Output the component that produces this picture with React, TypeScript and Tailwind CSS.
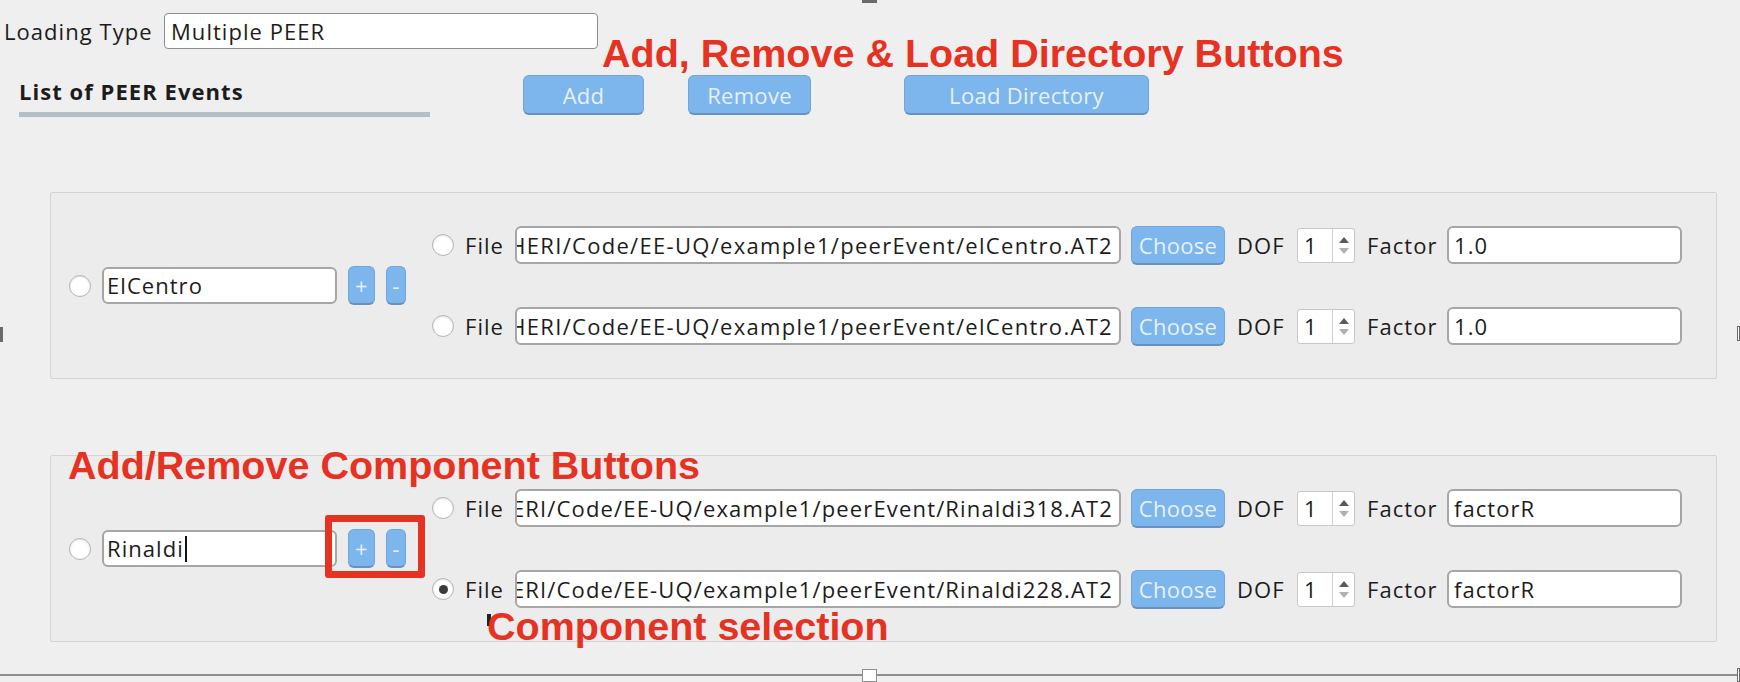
import React from "react";

const FONT = "font-['Open_Sans','Noto_Sans',sans-serif] tracking-[1.05px]";
const RED = "absolute font-['Liberation_Sans',Arial,sans-serif] font-bold text-[39.5px] leading-none tracking-normal text-[#e53222] whitespace-nowrap";

function Radio({ checked = false }: { checked?: boolean }) {
  return (
    <div className="w-[22px] h-[22px] shrink-0 rounded-full bg-white border border-[#b4b4b4] shadow-[inset_0_1px_2px_rgba(0,0,0,0.12)] flex items-center justify-center">
      {checked && <div className="w-[9px] h-[9px] rounded-full bg-[#3a3a3a]" />}
    </div>
  );
}

function BlueBtn({ label, w, h, text = "text-[22px]" }: { label: string; w: string; h: string; text?: string }) {
  return (
    <div
      className={`${w} ${h} ${text} shrink-0 rounded-[6px] bg-[#7db5ed] border border-[#6fa6dc] border-b-[2px] border-b-[#6592c0] text-[#e6f1fc] flex items-center justify-center leading-none tracking-[0.3px]`}
    >
      {label}
    </div>
  );
}

function Spin() {
  return (
    <div className="w-[58px] h-[35px] shrink-0 bg-white border border-[#c8c8c8] rounded-[3px] flex">
      <div className="flex-1 flex items-center pl-[6px] text-[22px] text-[#1c1c1c]">1</div>
      <div className="w-[22px] border-l border-[#d0d0d0] flex flex-col items-center justify-center gap-[5px]">
        <svg width="10" height="6" viewBox="0 0 10 6">
          <path d="M5 0 L10 6 L0 6 Z" fill="#5a5a5a" />
        </svg>
        <svg width="10" height="6" viewBox="0 0 10 6">
          <path d="M0 0 L10 0 L5 6 Z" fill="#b0b0b0" />
        </svg>
      </div>
    </div>
  );
}

type Row = { path: string; factor: string; checked?: boolean; tight?: boolean };

function FileRow({ path, factor, checked = false, tight = false }: Row) {
  return (
    <div className="flex items-center h-[40px]">
      <Radio checked={checked} />
      <span className="ml-[11px] w-[50px] shrink-0 text-[22px]">File</span>
      <div
        className={`w-[606px] h-[38px] shrink-0 bg-white border-2 border-[#a6a6a6] rounded-[6px] overflow-hidden flex items-center justify-end pr-[6px] whitespace-nowrap text-[22px] ${
          tight ? "tracking-[1.15px]" : "tracking-[1.3px]"
        }`}
      >
        <span>{path}</span>
      </div>
      <div className="ml-[10px]">
        <BlueBtn label="Choose" w="w-[94px]" h="h-[39px]" />
      </div>
      <span className="ml-[12px] w-[60px] shrink-0 text-[22px]">DOF</span>
      <Spin />
      <span className="ml-[12px] w-[80px] shrink-0 text-[22px]">Factor</span>
      <div className="w-[235px] h-[38px] shrink-0 bg-white border-2 border-[#a6a6a6] rounded-[6px] flex items-center pl-[5px] text-[22px]">
        {factor}
      </div>
    </div>
  );
}

function Group({ name, rows, cursor = false }: { name: string; rows: Row[]; cursor?: boolean }) {
  return (
    <div className="ml-[50px] w-[1667px] h-[187px] border border-[#d4d4d4] rounded-[2px] bg-[#ececec] flex items-center">
      <div className="ml-[18px]">
        <Radio />
      </div>
      <div className="ml-[11px] w-[235px] h-[37px] shrink-0 bg-white border-2 border-[#a6a6a6] rounded-[6px] flex items-center pl-[3px] text-[22px]">
        <span>{name}</span>
        {cursor && <span className="w-[2px] h-[26px] bg-[#111] ml-[1px]" />}
      </div>
      <div className="ml-[11px]">
        <BlueBtn label="+" w="w-[27px]" h="h-[39px]" />
      </div>
      <div className="ml-[11px]">
        <BlueBtn label="-" w="w-[20px]" h="h-[39px]" />
      </div>
      <div className="ml-[26px] flex flex-col gap-[41px]">
        {rows.map((r, i) => (
          <FileRow key={i} {...r} />
        ))}
      </div>
    </div>
  );
}

export default function App() {
  return (
    <div className={`relative w-[1740px] h-[682px] overflow-hidden bg-[#efefef] text-[#1c1c1c] ${FONT}`}>
      {/* top row */}
      <div className="flex items-center pt-[13px]">
        <span className="ml-[4px] w-[160px] text-[22px] leading-none">Loading Type</span>
        <div className="w-[434px] h-[36px] bg-white border border-[#8c8c8c] rounded-[4px] flex items-center pl-[6px] text-[22px]">
          Multiple PEER
        </div>
      </div>

      {/* list header + buttons */}
      <div className="flex mt-[26px] h-[42px]">
        <div className="ml-[19px] w-[411px] flex flex-col justify-end">
          <div className="font-bold text-[22px] leading-[30px] mb-[6px]">List of PEER Events</div>
          <div className="h-[5px] bg-[#b4bec7]" />
        </div>
        <div className="ml-[93px] flex gap-[44px] items-start">
          <BlueBtn label="Add" w="w-[121px]" h="h-[40px]" />
          <BlueBtn label="Remove" w="w-[123px]" h="h-[40px]" />
          <div className="ml-[49px]">
            <BlueBtn label="Load Directory" w="w-[245px]" h="h-[40px]" />
          </div>
        </div>
      </div>

      <div className="mt-[75px]">
        <Group
          name="ElCentro"
          rows={[
            { path: "NHERI/Code/EE-UQ/example1/peerEvent/elCentro.AT2", factor: "1.0" },
            { path: "NHERI/Code/EE-UQ/example1/peerEvent/elCentro.AT2", factor: "1.0" },
          ]}
        />
      </div>
      <div className="mt-[76px]">
        <Group
          name="Rinaldi"
          cursor
          rows={[
            { path: "NHERI/Code/EE-UQ/example1/peerEvent/Rinaldi318.AT2", factor: "factorR", tight: true },
            { path: "NHERI/Code/EE-UQ/example1/peerEvent/Rinaldi228.AT2", factor: "factorR", checked: true, tight: true },
          ]}
        />
      </div>

      {/* bottom splitter line */}
      <div className="mt-[32px] h-[2px] bg-[#8e8e8e]" />

      {/* splitter handles */}
      <div className="absolute left-[862px] top-0 w-[15px] h-[3px] bg-[#6a6a6a]" />
      <div className="absolute left-0 top-[327px] w-[3px] h-[15px] bg-[#6a6a6a]" />
      <div className="absolute right-0 top-[326px] w-[3px] h-[15px] border border-[#6a6a6a] bg-white" />
      <div className="absolute left-[862px] top-[669px] w-[15px] h-[13px] border border-[#8e8e8e] bg-white" />
      <div className="absolute right-0 top-[668px] w-[3px] h-[14px] border border-[#6a6a6a] bg-white" />

      {/* annotations */}
      <div className={`${RED} left-[602px] top-[34px]`}>Add, Remove &amp; Load Directory Buttons</div>
      <div className={`${RED} left-[68px] top-[446px]`}>Add/Remove Component Buttons</div>
      <div className="absolute left-[325px] top-[515px] w-[100px] h-[63px] border-[7px] border-[#e53222] rounded-[3px]" />
      <div className="absolute left-[487px] top-[614px] w-[4px] h-[12px] bg-[#222]" />
      <div className={`${RED} left-[487px] top-[607px]`}>Component selection</div>
    </div>
  );
}
